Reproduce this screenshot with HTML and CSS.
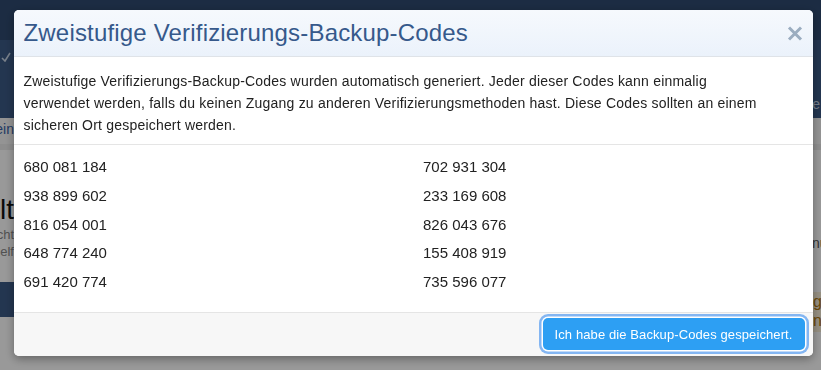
FILE: index.html
```html
<!DOCTYPE html>
<html lang="de">
<head>
    <meta charset="UTF-8">
    <meta name="viewport" content="width=device-width, initial-scale=1.0">
    <title>Zweistufige Verifizierung</title>
    <link rel="stylesheet" href="styles.css">
</head>
<body>
    <div class="page">
        <header class="topbar">
            <div class="brand">
                <svg width="10" height="10" viewBox="0 0 10 10"><path d="M1 6 L4 9 L9 1" fill="none" stroke="#c9d6e6" stroke-width="1.6"/></svg>
            </div>
            <nav class="topnav">Seite</nav>
        </header>
        <div class="subnav">
            <div class="crumbs"><span>Allgemein</span></div>
        </div>
        <main class="content">
            <section class="intro">
                <div class="intro-text">
                    <h2>Hallo Welt</h2>
                    <p>Das ist nicht</p>
                    <p>ein Notbehelf</p>
                </div>
                <div class="intro-bar"></div>
            </section>
            <section class="middle"></section>
            <aside class="notice">
                <p>nur</p>
                <div class="alert">
                    <span>g</span>
                    <span>n</span>
                </div>
            </aside>
        </main>
    </div>

    <div class="overlay">
        <div class="modal">
            <div class="modal-header">
                <h1>Zweistufige Verifizierungs-Backup-Codes</h1>
                <button class="close" aria-label="Schließen">
                    <svg width="16" height="15" viewBox="0 0 16 15"><path d="M2 1.5 L14 13.5 M14 1.5 L2 13.5" stroke="#9badc0" stroke-width="3"/></svg>
                </button>
            </div>
            <div class="modal-body">
                Zweistufige Verifizierungs-Backup-Codes wurden automatisch generiert. Jeder dieser Codes kann einmalig<br>
                verwendet werden, falls du keinen Zugang zu anderen Verifizierungsmethoden hast. Diese Codes sollten an einem sicheren Ort gespeichert werden.
            </div>
            <div class="codes">
                <div>680 081 184</div>
                <div>702 931 304</div>
                <div>938 899 602</div>
                <div>233 169 608</div>
                <div>816 054 001</div>
                <div>826 043 676</div>
                <div>648 774 240</div>
                <div>155 408 919</div>
                <div>691 420 774</div>
                <div>735 596 077</div>
            </div>
            <div class="modal-footer">
                <button class="btn-primary">Ich habe die Backup-Codes gespeichert.</button>
            </div>
        </div>
    </div>
</body>
</html>
```

FILE: styles.css
```css
body {
    margin: 0;
    font-family: "Liberation Sans", Arial, sans-serif;
    background-color: #ffffff;
    width: 821px;
    height: 370px;
    overflow: hidden;
}

/* page behind the dialog */
.topbar {
    height: 118px;
    display: flex;
    justify-content: space-between;
    background: linear-gradient(#2f4a70 0, #2f4a70 40px, #3b5a86 40px);
}

.brand {
    align-self: center;
    padding: 0 0 4px 1px;
    display: flex;
}

.topnav {
    align-self: flex-end;
    margin-bottom: 5px;
    padding-right: 1px;
    font-size: 14px;
    line-height: 18px;
    color: #c5d3e4;
}

.subnav {
    height: 26px;
    background-color: #f7f7f7;
    border-bottom: 6px solid #ececec;
}

.crumbs {
    width: 14px;
    display: flex;
    justify-content: flex-end;
    white-space: nowrap;
    font-size: 14px;
    line-height: 22px;
    color: #3b63a6;
}

.content {
    display: grid;
    grid-template-columns: 14px 1fr 9px;
}

.intro {
    padding-top: 44px;
}

.intro-text {
    display: flex;
    flex-direction: column;
    align-items: flex-end;
    white-space: nowrap;
}

.intro h2 {
    margin: 0;
    font-size: 28px;
    line-height: 32px;
    font-weight: normal;
    color: #111111;
}

.intro p {
    margin: 0;
    font-size: 13px;
    line-height: 17px;
    color: #888888;
}

.intro-bar {
    height: 35px;
    margin-top: 22px;
    background-color: #3b5a86;
}

.notice {
    white-space: nowrap;
    padding-top: 85px;
    font-size: 14px;
}

.notice p {
    margin: 0 0 40px;
    line-height: 17px;
    color: #555555;
}

.alert {
    display: flex;
    flex-direction: column;
    height: 40px;
    padding-left: 1px;
    background-color: #fbf1da;
    color: #b37a10;
    font-size: 16px;
    line-height: 19px;
}

/* dialog */
.overlay {
    position: fixed;
    inset: 0;
    background-color: rgba(0, 0, 0, 0.4);
    padding: 10px 0 0 5px;
    display: flex;
    justify-content: center;
    align-items: flex-start;
}

.modal {
    width: 799px;
    background-color: #ffffff;
    border-radius: 5px;
    overflow: hidden;
    box-shadow: 0 3px 10px rgba(0, 0, 0, 0.35);
}

.modal-header {
    height: 46px;
    padding: 0 10px;
    display: flex;
    align-items: center;
    justify-content: space-between;
    background: linear-gradient(#f6f9fd, #ebf2fb);
    border-bottom: 1px solid #dfe3e8;
}

.modal-header h1 {
    margin: 0;
    font-size: 24px;
    line-height: 46px;
    font-weight: normal;
    letter-spacing: 0.18px;
    color: #36598b;
}

.close {
    border: none;
    background: none;
    padding: 0;
    display: flex;
    cursor: pointer;
}

.modal-body {
    padding: 13px 10px 8px;
    font-size: 14px;
    line-height: 22px;
    letter-spacing: 0.2px;
    color: #222222;
    border-bottom: 1px solid #e5e5e5;
}

.codes {
    display: grid;
    grid-template-columns: 1fr 1fr;
    column-gap: 20px;
    row-gap: 8.75px;
    padding: 12px 10px 20px;
    font-size: 15px;
    line-height: 20px;
    color: #222222;
}

.modal-footer {
    display: flex;
    justify-content: flex-end;
    padding: 5px 8px 6px;
    background-color: #f7f7f7;
    border-top: 1px solid #e5e5e5;
}

.btn-primary {
    height: 32px;
    padding: 0 12px;
    border: none;
    border-radius: 5px;
    background-color: #2d9ff3;
    color: #ffffff;
    font-family: "Liberation Sans", Arial, sans-serif;
    font-size: 13px;
    letter-spacing: 0.1px;
    cursor: pointer;
    box-shadow: 0 0 0 1.5px #ffffff, 0 0 0 4px #84b6f2;
}
```
